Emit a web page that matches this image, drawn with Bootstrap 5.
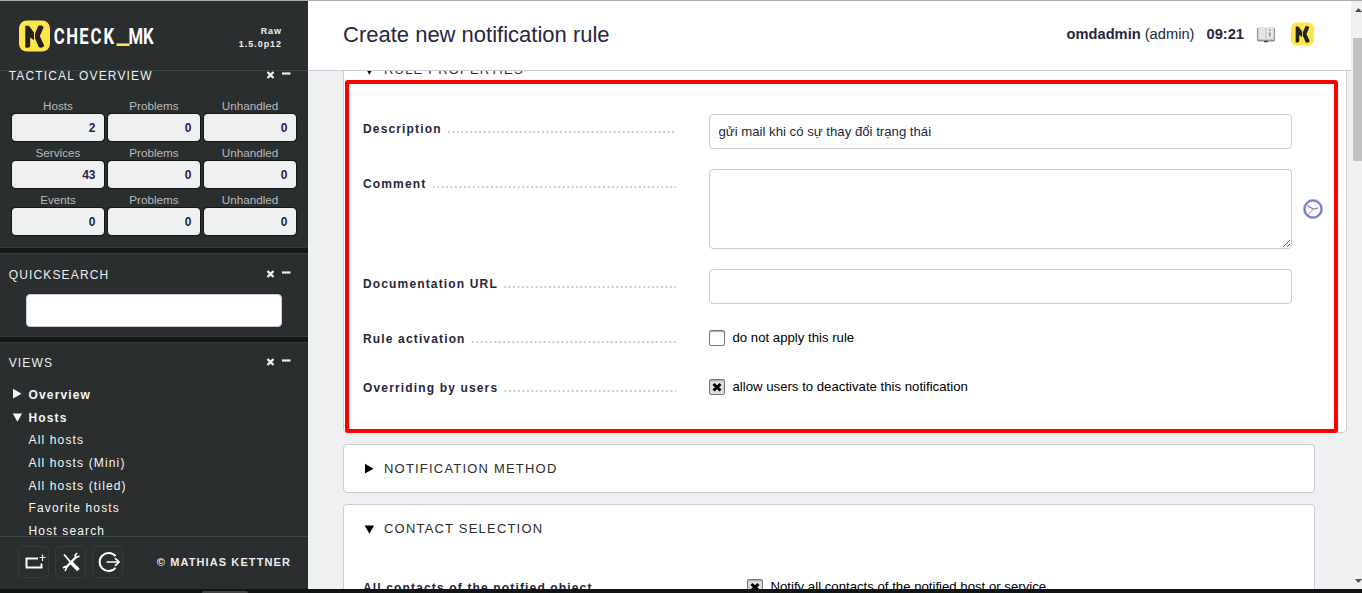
<!DOCTYPE html>
<html lang="en">
<head>
<meta charset="utf-8">
<meta name="viewport" content="width=device-width, initial-scale=1">
<title>Create new notification rule</title>
<link href="https://cdn.jsdelivr.net/npm/bootstrap@5.3.0/dist/css/bootstrap.min.css" rel="stylesheet">
<style>
  body { font-family: "Liberation Sans", Arial, sans-serif; font-size: 13px; height: 593px; color: #000; background: #eff0f2; border-top: 1px solid #acacac; border-bottom: 4px solid #111415; }
  .sidebar { width: 308px; background: #2a2e2f; color: #fff; }
  .side-head { height: 70px; border-bottom: 1px solid #3d4647; }
  .version { font-size: 9px; font-weight: bold; letter-spacing: .95px; line-height: 13px; width: 60px; margin: 24px 26px 0 0; color: #eee; }
  .snapins { background: #151818; gap: 5px; }
  .snapin { background: #2a2e2f; border-top: 1px solid #34393a; border-bottom: 1px solid #34393a; flex: none; }
  .snapin h2 { font-size: 12px; font-weight: normal; letter-spacing: 1.15px; line-height: 20px; margin: 0; padding-left: 8.7px; color: #eee; height: 20px; }
  .snapin h2 svg { margin-right: 17px; position: relative; top: -1px; }
  .tactical { margin-top: -6px; height: 183px; }
  .counters { display: grid; grid-template-columns: repeat(3, 94px); column-gap: 2px; margin: 13px 0 0 11px; }
  .counters div { height: 47px; }
  .counters small { display: block; height: 14px; line-height: 13px; font-size: 11.7px; text-align: center; color: #b8baba; }
  .counters b { display: block; height: 29px; border: 1px solid #151718; border-radius: 4px; background: #eff0f2; background-clip: padding-box; color: #262640; font-size: 12px; line-height: 29px; text-align: right; padding-right: 8.5px; }
  .quick { height: 84px; padding-top: 11px; }
  .quick input { display: block; width: 256px; height: 33px; margin: 9px 0 0 26px; border: 1px solid #cacad8; border-radius: 4px; background: #fff; }
  .views { height: 220px; padding-top: 10px; }
  .tree { margin: 11px 0 0; padding: 0 0 0 12px; list-style: none; font-size: 12px; letter-spacing: 1.15px; line-height: 22px; color: #f6f6f6; }
  .tree li { display: flex; height: 22.7px; }
  .tree svg { width: 12px; height: 12px; margin: 4px 4.5px 0 0; flex: none; }
  .tree .leaf { padding-left: 16.5px; }
  .side-foot { height: 53px; border-top: 1px solid #3d4647; background: #2a2e2f; padding: 9px 0 0 18px; }
  .tool { width: 31px; height: 32px; margin-right: 6px; border: 1px solid #363b3c; border-radius: 5px; }
  .credit { font-size: 11px; font-weight: bold; letter-spacing: 1.1px; line-height: 32px; margin: 0 17px 0 auto; color: #ededed; }
  .page-head { height: 70px; background: #fff; border-bottom: 1px solid #cacad8; padding: 0 37px 3px 35px; color: #262640; }
  .page-head h1 { font-size: 22px; font-weight: normal; margin: 2px 0 0; }
  .user { font-size: 14.67px; line-height: 18px; }
  .scrolled { margin-top: -26px; padding-left: 35px; }
  .panel { position: relative; width: 972px; height: 49px; margin-bottom: 11px; background: #fff; border: 1px solid #cacad8; border-radius: 4px; }
  .panel.rule { width: 1004px; height: 388px; }
  .panel h3 { display: flex; font-size: 13px; font-weight: normal; letter-spacing: 1.2px; line-height: 20px; margin: 0; padding: 14px 0 0 20px; color: #2e2e2e; height: 34px; }
  .panel h3 svg { width: 12px; height: 12px; margin: 4px 8px 0 0; color: #000; }
  .fields { padding: 34px 0 0 19px; }
  .field { display: flex; margin-bottom: 20px; }
  .legend-text { width: 313px; margin-right: 33px; height: 29px; overflow: hidden; white-space: nowrap; font-size: 12px; font-weight: bold; letter-spacing: 1.15px; line-height: 31px; color: #262640; }
  .legend-text::after { content: "......................................................................................."; color: #c8c8c8; margin-left: 5.5px; }
  .entry { width: 583px; height: 35px; border: 1px solid #cacad8; border-radius: 4px; background: #fff; color: #262640; font-size: 13.2px; padding: 0 8.5px; line-height: 33px; outline: 0; display: block; }
  textarea.entry { height: 80px; resize: vertical; }
  .choice { display: flex; align-items: center; height: 27px; margin-bottom: 2px; font-size: 13.2px; }
  .choice input { appearance: none; width: 16px; height: 16px; margin: 1px 7.500px 0 0; border: 1px solid #777; border-radius: 2px; background: #fff; box-shadow: inset 0 1px 1px #aaa; }
  .choice input:checked { background: #dedede url("data:image/svg+xml,%3Csvg xmlns='http://www.w3.org/2000/svg' viewBox='0 0 14 14'%3E%3Cpath d='M3.5 4l7 6.5m0-6.5l-7 6.5' stroke='%23000' stroke-width='3'/%3E%3C/svg%3E") center/14px; }
  .marked { position: absolute; left: 1px; top: 34px; width: 993px; height: 353px; border: 4px solid #f00; border-radius: 3px; pointer-events: none; }
  .clock { margin: 29px 0 0 11px; }
  .scrollrail { width: 11px; background: #f1f1f1; padding: 7px 0 0 2px; flex: none; }
  .scrollrail svg { display: block; margin-left: 2px; }
  .thumb { height: 123px; background: #c1c1c1; margin-top: 26px; }
  .desk-tab { position: absolute; left: 202px; top: 591px; width: 46px; height: 2px; background: #444; border-radius: 2px 2px 0 0; }
</style>
</head>
<body class="d-flex overflow-hidden">
<svg class="d-none">
  <symbol id="mk" viewBox="0 0 32 32"><rect width="32" height="32" rx="8" fill="#ffe44a"/><path d="M6.500 6q1.500-1.500 4 0l5 6.500v8l-4-3v9q-2 2.500-5 1z" fill="#222"/><path d="M16.500 13.500l3.500-8q3-1.500 5.500 1.500l-4 9 4.500 10q-2 3-5.500 1.500l-4-9z" fill="#222"/></symbol>
  <symbol id="right" viewBox="0 0 12 12"><path d="M1 .8l8.500 4.900L1 10.600z" fill="currentColor"/></symbol>
  <symbol id="down" viewBox="0 0 12 12"><path d="M.7 2.500h9.400l-4.700 8.300z" fill="currentColor"/></symbol>
  <symbol id="ctl" viewBox="0 0 25 10"><path d="M1.500 2l6 6m0-6l-6 6" stroke="#eee" stroke-width="2.400" fill="none"/><path d="M16 3.500h8.500" stroke="#eee" stroke-width="2.200"/></symbol>
</svg>

<aside class="sidebar d-flex flex-column flex-shrink-0">
  <div class="side-head d-flex flex-shrink-0">
    <svg width="140" height="36" style="margin:18px 0 0 18px">
      <use href="#mk" x="1" y="1" width="31" height="32"/>
      <g transform="scale(.76 1)" font-family="Roboto" font-weight="700" font-size="22">
        <text y="25" fill="#fff" x="47 63.500 80.500 95.500 112.500">CHECK</text>
        <text y="25.500" x="129.500" fill="#ffe44a" textLength="17" lengthAdjust="spacingAndGlyphs">_</text>
        <text y="25" fill="#fff" x="145.500 164.500">MK</text>
      </g>
    </svg>
    <div class="version text-end ms-auto">Raw<br>1.5.0p12</div>
  </div>
  <div class="snapins d-flex flex-column flex-grow-1 overflow-hidden">
    <section class="snapin tactical">
      <h2 class="d-flex align-items-center">TACTICAL OVERVIEW<svg class="ms-auto" width="25" height="10"><use href="#ctl"/></svg></h2>
      <div class="counters">
        <div><small>Hosts</small><b>2</b></div><div><small>Problems</small><b>0</b></div><div><small>Unhandled</small><b>0</b></div>
        <div><small>Services</small><b>43</b></div><div><small>Problems</small><b>0</b></div><div><small>Unhandled</small><b>0</b></div>
        <div><small>Events</small><b>0</b></div><div><small>Problems</small><b>0</b></div><div><small>Unhandled</small><b>0</b></div>
      </div>
    </section>
    <section class="snapin quick">
      <h2 class="d-flex align-items-center">QUICKSEARCH<svg class="ms-auto" width="25" height="10"><use href="#ctl"/></svg></h2>
      <input type="text" aria-label="Quicksearch">
    </section>
    <section class="snapin views">
      <h2 class="d-flex align-items-center">VIEWS<svg class="ms-auto" width="25" height="10"><use href="#ctl"/></svg></h2>
      <ul class="tree">
        <li><svg><use href="#right"/></svg><b>Overview</b></li>
        <li><svg><use href="#down"/></svg><b>Hosts</b></li>
        <li class="leaf">All hosts</li>
        <li class="leaf">All hosts (Mini)</li>
        <li class="leaf">All hosts (tiled)</li>
        <li class="leaf">Favorite hosts</li>
        <li class="leaf">Host search</li>
      </ul>
    </section>
  </div>
  <div class="side-foot d-flex flex-shrink-0">
    <span class="tool"><svg class="d-block" width="29" height="30" fill="none" stroke="#fff"><path d="M19 11.500H7.500v9h15v-4" stroke-width="2"/><path d="M20.500 10.500h6m-3-3v6.500" stroke-width="1.200"/></svg></span>
    <span class="tool"><svg class="d-block" width="29" height="30" fill="none" stroke="#fff"><path d="M8 7.500l6.500 7.500" stroke-width="1.800"/><path d="M14 14.500l8.500 8.500" stroke-width="3.500"/><path d="M20 10L9.500 21" stroke-width="2.400"/><path d="M21 6l-2 2.500 1.500 2 3-1.500M7 21l2-1.500 1.500 1.500-1.500 3" stroke-width="1.600"/></svg></span>
    <span class="tool"><svg class="d-block" width="29" height="30" fill="none" stroke="#fff" stroke-width="2"><path d="M22.500 9.200a9 9 0 1 0 0 11.600"/><path d="M13.500 15H26m-4-3.800l4 3.800-4 3.800" stroke-width="1.700"/></svg></span>
    <span class="credit">© MATHIAS KETTNER</span>
  </div>
</aside>

<main class="flex-grow-1 overflow-hidden d-flex flex-column">
  <header class="page-head d-flex align-items-center flex-shrink-0">
    <h1>Create new notification rule</h1>
    <div class="user ms-auto"><b>omdadmin</b> (admin) <b class="ms-2">09:21</b></div>
    <svg width="20" height="18" style="margin:2px 15px 0 12px">
      <path d="M1.500 2v12.500h7l1.500 1 1.500-1h7V2" fill="#bbb" stroke="#999" stroke-width="1.200"/>
      <path d="M2.500 1.500q4-1 7.200 1v11.500q-3.500-1.500-7.200-.7zM10.300 2.500q3.200-2 7.200-1v11.800q-4-.8-7.200.7z" fill="#e6e6e6" stroke="#ccc" stroke-width=".5"/>
      <path d="M13.800 3.500v1.500m0 1.500v4" stroke="#888" stroke-width="1.500"/><path d="M2 15h16" stroke="#888"/><path d="M8 15.500h4" stroke="#444" stroke-width="1.500"/>
    </svg>
    <svg width="23" height="24"><use href="#mk" width="23" height="24"/></svg>
  </header>
  <div class="flex-grow-1 overflow-hidden">
    <div class="scrolled">
      <section class="panel rule">
        <h3><svg><use href="#down"/></svg>RULE PROPERTIES</h3>
        <div class="fields">
          <div class="field"><div class="legend-text">Description</div><input class="entry" type="text" value="gửi mail khi có sự thay đổi trạng thái" aria-label="Description"></div>
          <div class="field"><div class="legend-text">Comment</div><textarea class="entry" aria-label="Comment"></textarea>
            <svg class="clock" width="21" height="22"><circle cx="10" cy="11" r="8.600" fill="#f7f7fd" stroke="#6b76d2" stroke-width="2.200"/><circle cx="10" cy="11" r="9.600" fill="none" stroke="#a5b5e8"/><path d="M4.500 7.500l5.500 3.500 5-1" stroke="#888" stroke-width="1.200" fill="none"/><path d="M10 11L5.500 16.500" stroke="#ff8b96" stroke-width="1"/></svg></div>
          <div class="field"><div class="legend-text">Documentation URL</div><input class="entry" type="text" aria-label="Documentation URL"></div>
          <div class="field"><div class="legend-text">Rule activation</div><label class="choice"><input type="checkbox">do not apply this rule</label></div>
          <div class="field"><div class="legend-text">Overriding by users</div><label class="choice"><input type="checkbox" checked>allow users to deactivate this notification</label></div>
        </div>
        <div class="marked"></div>
      </section>
      <section class="panel"><h3><svg><use href="#right"/></svg>NOTIFICATION METHOD</h3></section>
      <section class="panel" style="height:160px">
        <h3><svg><use href="#down"/></svg>CONTACT SELECTION</h3>
        <div class="fields">
          <div class="field"><div class="legend-text" style="width:351px">All contacts of the notified object</div><label class="choice"><input type="checkbox" checked>Notify all contacts of the notified host or service.</label></div>
        </div>
      </section>
    </div>
  </div>
</main>

<div class="scrollrail d-flex flex-column">
  <svg width="7" height="4"><path d="M0 4h7L3.500 0z" fill="#505050"/></svg>
  <div class="thumb"></div>
  <svg class="mt-auto" width="7" height="4" style="margin-bottom:6px"><path d="M0 0h7L3.500 4z" fill="#505050"/></svg>
</div>
<div class="desk-tab"></div>
<script src="https://cdn.jsdelivr.net/npm/bootstrap@5.3.0/dist/js/bootstrap.bundle.min.js"></script>
</body>
</html>
